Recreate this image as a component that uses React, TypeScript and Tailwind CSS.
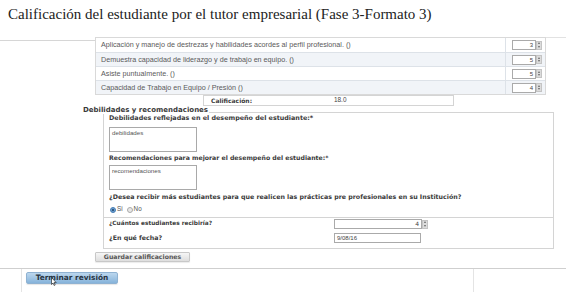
import { useState } from 'react'

const criterios = [
  { label: 'Aplicación y manejo de destrezas y habilidades acordes al perfil profesional. ()', value: 3 },
  { label: 'Demuestra capacidad de liderazgo y de trabajo en equipo. ()', value: 5 },
  { label: 'Asiste puntualmente. ()', value: 5 },
  { label: 'Capacidad de Trabajo en Equipo / Presión ()', value: 4 },
]

const verdana = { fontFamily: '"DejaVu Sans", Verdana, sans-serif' }
const arial = { fontFamily: '"Liberation Sans", Arial, sans-serif' }

function Spinner() {
  return (
    <div className="w-[6px] h-[9px] flex flex-col bg-[#dcdcdc] border border-[#c4c4c4]">
      <div className="flex-1 flex items-center justify-center">
        <div className="w-0 h-0 border-l-[1.5px] border-r-[1.5px] border-b-[2px] border-l-transparent border-r-transparent border-b-[#666]" />
      </div>
      <div className="flex-1 flex items-center justify-center">
        <div className="w-0 h-0 border-l-[1.5px] border-r-[1.5px] border-t-[2px] border-l-transparent border-r-transparent border-t-[#666]" />
      </div>
    </div>
  )
}

function NumberBox({ value, width }: { value: number; width: string }) {
  return (
    <div className="flex items-center">
      <div className={`${width} h-[10px] border border-[#aaa] bg-white flex items-center justify-end pr-[2px] text-[6px] text-[#444]`}>
        {value}
      </div>
      <Spinner />
    </div>
  )
}

export default function App() {
  const [recibir, setRecibir] = useState(true)

  return (
    <div className="w-[566px] h-[292px] bg-white overflow-hidden text-[#444] leading-none" style={arial}>
      <h1 className="pl-[8px] pt-[6px] h-[37px] text-[15px] leading-[17px] text-[#222]" style={{ fontFamily: '"Liberation Serif", "Times New Roman", serif' }}>
        Calificación del estudiante por el tutor empresarial (Fase 3-Formato 3)
      </h1>

      <div className="flex">
        <div className="w-[95px] mt-[3px] border-t border-[#d6d6d6]" />
        <div className="w-[451px] border border-[#d9d9d9]">
          {criterios.map((c, i) => (
            <div key={i} className={`flex h-[14px] ${i > 0 ? 'border-t border-[#dde2e8]' : ''} ${i % 2 === 1 ? 'bg-[#f1f4f8]' : 'bg-white'}`}>
              <div className="w-[410px] pl-[5px] flex items-center text-[7.2px] text-[#5a5a5a] border-r border-[#dde2e8]">
                {c.label}
              </div>
              <div className="flex-1 pl-[6px] flex items-center">
                <NumberBox value={c.value} width="w-[24px]" />
              </div>
            </div>
          ))}
        </div>
        <div className="flex-1 border-t border-[#e2e2e2]" />
      </div>

      <div className="ml-[203px] w-[251px] h-[11px] border border-[#d4d4d4] flex items-center text-[6.4px] text-[#444]">
        <span className="ml-[7px] w-[123px] font-bold text-[6px] text-[#3a3a3a]" style={verdana}>Calificación:</span>
        <span>18.0</span>
      </div>

      <div className="ml-[83px] relative z-10 -mb-[2px] h-[8px] leading-[8px] w-fit bg-white pr-[1px] font-bold text-[#3a3a3a] text-[7px]" style={verdana}>
        Debilidades y recomendaciones
      </div>

      <div className="ml-[103px] w-[451px] border border-[#d4d4d4] text-[#3a3a3a]" style={verdana}>
        <div className="pl-[5px] pt-[1px] pb-[3px]">
          <div className="h-[8px] leading-[8px] font-bold text-[6.4px]">Debilidades reflejadas en el desempeño del estudiante:*</div>
          <div className="mt-[5px] w-[88px] h-[25px] border border-[#a9a9a9] px-[2px] pt-[2px] text-[6.2px] text-[#555]" style={arial}>debilidades</div>
          <div className="mt-[2px] h-[8px] leading-[8px] font-bold text-[6.2px]">Recomendaciones para mejorar el desempeño del estudiante:*</div>
          <div className="mt-[3px] w-[88px] h-[25px] border border-[#a9a9a9] px-[2px] pt-[2px] text-[6.2px] text-[#555]" style={arial}>recomendaciones</div>
          <div className="mt-[3px] h-[8px] leading-[8px] font-bold text-[6.3px]">¿Desea recibir más estudiantes para que realicen las prácticas pre profesionales en su Institución?</div>
          <div className="mt-[4px] flex items-center h-[9px] text-[6.3px] text-[#555]" style={arial}>
            <button onClick={() => setRecibir(true)} className={`ml-[1px] w-[6px] h-[6px] rounded-full border ${recibir ? 'border-[#4a7fb3] bg-[#6a9fd0]' : 'border-[#aaa] bg-[#e8e8e8]'} flex items-center justify-center`}>
              {recibir && <span className="w-[2px] h-[2px] rounded-full bg-[#1f3f66]" />}
            </button>
            <span className="ml-[1px]">Si</span>
            <button onClick={() => setRecibir(false)} className={`ml-[4px] w-[6px] h-[6px] rounded-full border ${!recibir ? 'border-[#4a7fb3] bg-[#6a9fd0]' : 'border-[#aaa] bg-[#e8e8e8]'}`} />
            <span className="ml-[1px]">No</span>
          </div>
        </div>
        <div className="border-t border-[#d4d4d4] pl-[5px] pt-[1px] pb-[5px]">
          <div className="flex items-center h-[10px]">
            <div className="w-[225px] font-bold text-[5.8px]">¿Cuántos estudiantes recibiría?</div>
            <NumberBox value={4} width="w-[88px]" />
          </div>
          <div className="flex items-center h-[10px] mt-[4px]">
            <div className="w-[225px] font-bold text-[6.3px]">¿En qué fecha?</div>
            <div className="w-[87px] h-[10px] border border-[#aaa] flex items-center pl-[2px] text-[6px] text-[#444]" style={arial}>9/08/16</div>
          </div>
        </div>
      </div>

      <div className="ml-[95px] mt-[3px] w-[95px] h-[10px] rounded-[1px] border border-[#c8c8c8] bg-gradient-to-b from-[#f6f6f6] to-[#dedede] shadow-[0_1px_1px_rgba(0,0,0,0.08)] flex items-center justify-center font-bold text-[6.2px] text-[#555]" style={verdana}>
        Guardar calificaciones
      </div>

      <div className="mt-[6px] border-t border-[#cfcfcf] flex h-[30px]">
        <div className="w-[22px] border-r border-[#e4e4e4]" />
        <div className="w-[451px] pl-[4px] pt-[3px]">
          <div className="relative w-[92px] h-[12px] rounded-[2px] border border-[#8fb2d2] bg-gradient-to-b from-[#bcd7ee] to-[#86b3da] shadow-[0_1px_1px_rgba(0,0,0,0.1)] flex items-center justify-center font-bold text-[7.4px] text-[#2a3542]" style={verdana}>
            Terminar revisión
            <svg className="absolute left-[24px] top-[4px]" width="6" height="9" viewBox="0 0 6 9">
              <path d="M0.5 0.5 L0.5 7.5 L2 6 L3.2 8.5 L4.2 8 L3 5.6 L5.2 5.6 Z" fill="#fff" stroke="#111" strokeWidth="0.6" />
            </svg>
          </div>
        </div>
        <div className="flex-1 border-l border-[#e4e4e4]" />
      </div>
    </div>
  )
}
